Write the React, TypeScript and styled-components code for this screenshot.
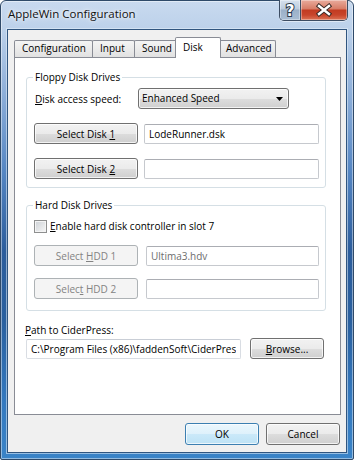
import styled, { createGlobalStyle, css } from "styled-components";

const GlobalStyle = createGlobalStyle`
  html, body {
    margin: 0;
    padding: 0;
    background: #ffffff;
  }
  body {
    font-family: "Open Sans", "Noto Sans", sans-serif;
    font-size: 10px;
    color: #000;
  }
`;

type TabDef = { label: string; width: number };

const tabs: TabDef[] = [
  { label: "Configuration", width: 79 },
  { label: "Input", width: 43 },
  { label: "Sound", width: 43 },
  { label: "Disk", width: 46 },
  { label: "Advanced", width: 58 },
];

const App = () => {
  return (
    <>
      <GlobalStyle />
      <Window>
        <TitleBar>
          <Title>AppleWin Configuration</Title>
          <CaptionButtons>
            <CaptionButton $kind="help">
              <svg width="20" height="20" viewBox="0 0 20 20">
                <text
                  x="10"
                  y="16"
                  textAnchor="middle"
                  fontSize="15"
                  fontWeight="bold"
                  fontFamily="DejaVu Sans, sans-serif"
                  fill="#ffffff"
                  stroke="#2c3a4c"
                  strokeWidth="2"
                  paintOrder="stroke"
                >
                  ?
                </text>
              </svg>
            </CaptionButton>
            <CaptionButton $kind="close">
              <svg width="16" height="14" viewBox="0 0 16 14">
                <path d="M3 3 L13 11 M13 3 L3 11" stroke="#3a2a26" strokeWidth="4.4" strokeLinecap="square" />
                <path d="M3 3 L13 11 M13 3 L3 11" stroke="#ffffff" strokeWidth="2.4" strokeLinecap="square" />
              </svg>
            </CaptionButton>
          </CaptionButtons>
        </TitleBar>

        <Client>
          <TabStrip>
            {tabs.map((t) => (
              <Tab key={t.label} $active={t.label === "Disk"} $width={t.width}>
                {t.label}
              </Tab>
            ))}
          </TabStrip>

          <TabPanel>
            <GroupBox>
              <Legend>Floppy Disk Drives</Legend>
              <Row>
                <FieldLabel>
                  <Key>D</Key>isk access speed:
                </FieldLabel>
                <Combo>
                  Enhanced Speed
                  <svg width="7" height="4" viewBox="0 0 7 4">
                    <polygon points="0,0 7,0 3.5,4" fill="#000" />
                  </svg>
                </Combo>
              </Row>
              <Row $top={14} $gap={6}>
                <PushButton>
                  Select Disk <Key>1</Key>
                </PushButton>
                <TextField readOnly defaultValue="LodeRunner.dsk" />
              </Row>
              <Row $top={14} $gap={6}>
                <PushButton>
                  Select Disk <Key>2</Key>
                </PushButton>
                <TextField readOnly defaultValue="" />
              </Row>
            </GroupBox>

            <GroupBox $top={10} $bottom={11} $padTop={6}>
              <Legend>Hard Disk Drives</Legend>
              <CheckRow>
                <CheckBox />
                <span>
                  <Key>E</Key>nable hard disk controller in slot 7
                </span>
              </CheckRow>
              <Row $top={11} $gap={8}>
                <PushButton disabled>
                  Select <Key>H</Key>DD 1
                </PushButton>
                <TextField readOnly $dim defaultValue="Ultima3.hdv" />
              </Row>
              <Row $top={12} $gap={8}>
                <PushButton disabled>
                  Selec<Key>t</Key> HDD 2
                </PushButton>
                <TextField readOnly $dim defaultValue="" />
              </Row>
            </GroupBox>

            <PathLabel>
              <Key>P</Key>ath to CiderPress:
            </PathLabel>
            <Row $top={1} $gap={9}>
              <TextField
                readOnly
                $width={215}
                $soft
                defaultValue="C:\Program Files (x86)\faddenSoft\CiderPress\CiderPress.exe"
              />
              <PushButton $width={74}>
                <Key>B</Key>rowse...
              </PushButton>
            </Row>
          </TabPanel>

          <Footer>
            <PushButton $width={74} $height={22} $default>
              OK
            </PushButton>
            <PushButton $width={74} $height={22}>
              Cancel
            </PushButton>
          </Footer>
        </Client>
      </Window>
    </>
  );
};

export default App;

const Window = styled.div`
  width: 354px;
  height: 460px;
  box-sizing: border-box;
  display: flex;
  flex-direction: column;
  padding: 0 6px 6px;
  border: 1px solid #2f4a69;
  border-radius: 6px 6px 2px 2px;
  background: linear-gradient(
    180deg,
    #c9daef 0px,
    #bcd1ea 28px,
    #8fb0da 90px,
    #5586c3 170px,
    #2c5d9c 250px,
    #2a609f 320px,
    #3479bf 400px,
    #3a84c8 460px
  );
  box-shadow: inset 0 0 0 1px rgba(255, 255, 255, 0.45);
`;

const TitleBar = styled.div`
  height: 28px;
  display: flex;
  align-items: flex-start;
  justify-content: space-between;
`;

const Title = styled.div`
  padding: 5px 0 0 1px;
  font-size: 11.5px;
  line-height: 16px;
  color: #111;
  text-shadow: 0 0 6px rgba(255, 255, 255, 0.95), 0 0 3px rgba(255, 255, 255, 0.8);
`;

const CaptionButtons = styled.div`
  display: flex;
  margin: -1px -1px 0 0;
  border: 1px solid #3d4d63;
  border-top: none;
  border-radius: 0 0 5px 5px;
  overflow: hidden;
  box-shadow: 0 1px 0 rgba(255, 255, 255, 0.5);
`;

const CaptionButton = styled.div<{ $kind: "help" | "close" }>`
  height: 20px;
  display: flex;
  align-items: center;
  justify-content: center;
  box-shadow: inset 0 0 0 1px rgba(255, 255, 255, 0.35);
  ${(p) =>
    p.$kind === "help"
      ? css`
          width: 20px;
          border-right: 1px solid #3d4d63;
          background: linear-gradient(180deg, #d6e1ee 0%, #bccbdd 45%, #9bb0c8 50%, #a9bdd3 100%);
        `
      : css`
          width: 46px;
          background: linear-gradient(180deg, #e9ab9c 0%, #d77c66 45%, #c23b21 50%, #c8452b 75%, #dd7355 100%);
        `}
`;

const Client = styled.div`
  flex: 1;
  display: flex;
  flex-direction: column;
  padding: 7px 5px 0 6px;
  background: #f0f0f0;
  border: 1px solid #30557f;
  box-shadow: 0 0 0 1px rgba(230, 240, 250, 0.55);
`;

const TabStrip = styled.div`
  height: 20px;
  display: flex;
  align-items: flex-end;
`;

const Tab = styled.div<{ $active?: boolean; $width: number }>`
  position: relative;
  box-sizing: border-box;
  width: ${(p) => p.$width}px;
  height: 17px;
  margin-left: -1px;
  padding-left: 7px;
  line-height: 15px;
  white-space: nowrap;
  border: 1px solid #898c95;
  border-bottom: none;
  border-radius: 2px 2px 0 0;
  background: linear-gradient(180deg, #f4f4f4 0%, #ebebeb 50%, #e1e1e1 100%);

  &:first-child {
    margin-left: 0;
  }

  ${(p) =>
    p.$active &&
    css`
      z-index: 1;
      height: 21px;
      margin: 0 -2px -1px -2px;
      line-height: 18px;
      background: #ffffff;
    `}
`;

const TabPanel = styled.div`
  height: 358px;
  box-sizing: border-box;
  display: flex;
  flex-direction: column;
  padding: 12px 14px 0 11px;
  background: #ffffff;
  border: 1px solid #898c95;
`;

const GroupBox = styled.fieldset<{ $top?: number; $bottom?: number; $padTop?: number }>`
  min-width: 0;
  margin: ${(p) => p.$top ?? 0}px 0 0 0;
  padding: ${(p) => p.$padTop ?? 4}px 6px ${(p) => p.$bottom ?? 8}px 7px;
  border: 1px solid #d5dfe5;
  border-radius: 3px;
`;

const Legend = styled.legend`
  margin-left: -1px;
  padding: 0 2px;
  line-height: 14px;
`;

const Row = styled.div<{ $top?: number; $gap?: number }>`
  display: flex;
  align-items: center;
  height: 21px;
  margin-top: ${(p) => p.$top ?? 0}px;
  gap: ${(p) => p.$gap ?? 0}px;
`;

const FieldLabel = styled.div`
  width: 103px;
  padding-left: 1px;
  white-space: nowrap;
`;

const Key = styled.span`
  text-decoration: underline;
  text-underline-offset: 1px;
`;

const buttonFace = css`
  background: linear-gradient(180deg, #f2f2f2 0%, #ebebeb 50%, #dddddd 51%, #cfcfcf 100%);
  border: 1px solid #707070;
  border-radius: 3px;
  box-shadow: inset 0 0 0 1px rgba(255, 255, 255, 0.75);
`;

const Combo = styled.div`
  ${buttonFace};
  box-sizing: border-box;
  width: 151px;
  height: 21px;
  display: flex;
  align-items: center;
  justify-content: space-between;
  padding: 0 5px 0 3px;
  line-height: 19px;
`;

const PushButton = styled.button<{ $width?: number; $height?: number; $default?: boolean }>`
  ${buttonFace};
  flex: none;
  box-sizing: border-box;
  width: ${(p) => p.$width ?? 104}px;
  height: ${(p) => p.$height ?? 21}px;
  padding: 0;
  font: inherit;
  color: #000;
  white-space: nowrap;

  ${(p) =>
    p.$default &&
    css`
      border-color: #3c7fb1;
      background: linear-gradient(180deg, #ecf7fd 0%, #def1fb 50%, #cbe9f9 51%, #bde2f5 100%);
      box-shadow: inset 0 0 0 1px rgba(255, 255, 255, 0.7);
    `}

  &:disabled {
    color: #838383;
    border-color: #adb2b5;
    background: #f4f4f4;
    box-shadow: none;
  }
`;

const TextField = styled.input<{ $width?: number; $dim?: boolean; $soft?: boolean }>`
  box-sizing: border-box;
  ${(p) => (p.$width ? `width: ${p.$width}px; flex: none;` : "flex: 1; min-width: 0;")}
  height: 20px;
  margin: 0;
  padding: 0 4px;
  font: inherit;
  color: ${(p) => (p.$dim ? "#6d6d6d" : "#000")};
  background: #ffffff;
  border: 1px solid ${(p) => (p.$soft ? "#d9dde3" : "#c6c9ce")};
  border-top-color: ${(p) => (p.$soft ? "#c9ced6" : "#abadb3")};
  border-radius: 2px;
  outline: none;
`;

const CheckRow = styled.div`
  display: flex;
  align-items: center;
  height: 16px;
  gap: 3px;
  white-space: nowrap;
`;

const CheckBox = styled.span`
  box-sizing: border-box;
  width: 13px;
  height: 13px;
  border: 1px solid #8e8f8f;
  background: linear-gradient(135deg, #cdd1d6 0%, #e4e6e8 55%, #f7f7f7 100%);
  box-shadow: inset 0 0 0 1px #f4f4f4;
`;

const PathLabel = styled.div`
  margin: 12px 0 0 -1px;
  line-height: 14px;
`;

const Footer = styled.div`
  display: flex;
  justify-content: flex-end;
  gap: 7px;
  margin-top: 8px;
  padding-right: 1px;
`;
